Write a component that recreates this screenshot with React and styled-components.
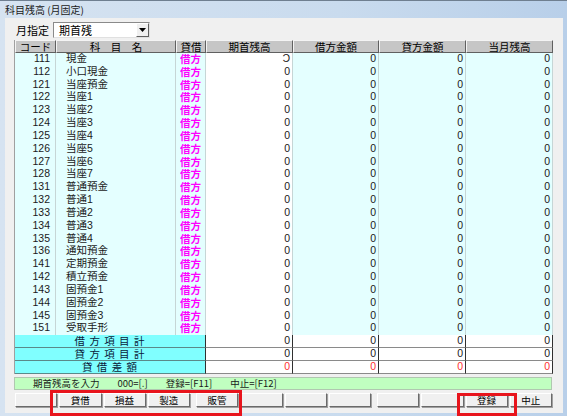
import React from 'react';
import styled, { createGlobalStyle } from 'styled-components';

const GlobalStyle = createGlobalStyle`
  html, body { margin: 0; padding: 0; background: #fff; }
  body { font-family: "Noto Sans CJK JP", "Noto Sans", sans-serif; }
  * { box-sizing: border-box; }
`;

const COLS = '41px 120px 30px 87px 86px 87px 87px';
const ROW_H = '12.84px';

const accounts = [
  ['111', '現金'], ['112', '小口現金'], ['121', '当座預金'], ['122', '当座1'],
  ['123', '当座2'], ['124', '当座3'], ['125', '当座4'], ['126', '当座5'],
  ['127', '当座6'], ['128', '当座7'], ['131', '普通預金'], ['132', '普通1'],
  ['133', '普通2'], ['134', '普通3'], ['135', '普通4'], ['136', '通知預金'],
  ['141', '定期預金'], ['142', '積立預金'], ['143', '固預金1'], ['144', '固預金2'],
  ['145', '固預金3'], ['151', '受取手形'],
];

const summary = [
  { label: '借 方 項 目 計', red: false },
  { label: '貸 方 項 目 計', red: false },
  { label: '貸 借 差 額', red: true },
];

const fkeys = [
  ['', '貸借', '損益', '製造'],
  ['販管', '', '', ''],
  ['', '', '登録', '中止'],
];

const App = () => {
  return (
    <>
      <GlobalStyle />
      <Window>
        <TitleBar>科目残高 (月固定)</TitleBar>
        <Client>
          <MonthRow>
            <MonthLabel>月指定</MonthLabel>
            <Combo>
              <ComboText>期首残</ComboText>
              <ComboButton>
                <svg width="7" height="4" viewBox="0 0 7 4">
                  <path d="M0 0h7L3.5 4z" fill="#000" />
                </svg>
              </ComboButton>
            </Combo>
          </MonthRow>

          <Table>
            <HeaderRow>
              <HeadCell>コード</HeadCell>
              <HeadCell>科　目　名</HeadCell>
              <HeadCell>貸借</HeadCell>
              <HeadCell>期首残高</HeadCell>
              <HeadCell>借方金額</HeadCell>
              <HeadCell>貸方金額</HeadCell>
              <HeadCell>当月残高</HeadCell>
            </HeaderRow>
            {accounts.map(([code, name], i) => (
              <Row key={code}>
                <Cell $align="right" $pad="0 5px 0 0">{code}</Cell>
                <Cell $pad="0 0 0 10px">{name}</Cell>
                <Cell $align="center" $pad="0"><Side>借方</Side></Cell>
                <Cell $align="right" $white>{i === 0 ? 'Ͻ' : '0'}</Cell>
                <Cell $align="right">0</Cell>
                <Cell $align="right">0</Cell>
                <Cell $align="right">0</Cell>
              </Row>
            ))}
            {summary.map(s => (
              <Row key={s.label}>
                <SumLabel>{s.label}</SumLabel>
                {[0, 1, 2, 3].map(k => (
                  <SumValue key={k} $red={s.red}>0</SumValue>
                ))}
              </Row>
            ))}
          </Table>

          <StatusBar>
            <span>期首残高を入力</span>
            <span>000=[.]</span>
            <span>登録=[F11]</span>
            <span>中止=[F12]</span>
          </StatusBar>

          <ButtonBar>
            {fkeys.map((group, g) => (
              <KeyGroup key={g}>
                {group.map((label, k) => (
                  <KeyButton key={k}>{label}</KeyButton>
                ))}
              </KeyGroup>
            ))}
          </ButtonBar>
        </Client>
        <Mark $x={50} $y={389} $w={192} $h={26} />
        <Mark $x={457} $y={392} $w={60} $h={23} />
      </Window>
    </>
  );
};

const Window = styled.div`
  position: relative;
  width: 567px;
  height: 416px;
  display: flex;
  flex-direction: column;
  background: linear-gradient(90deg, #d6e3f1 0%, #c9dbee 60%, #b8cfe9 100%);
  border-top: 1px solid #6f7f90;
  overflow: hidden;
`;

const TitleBar = styled.div`
  height: 17px;
  padding-left: 5px;
  font-size: 10px;
  line-height: 17px;
  color: #1a1a1a;
`;

const Client = styled.div`
  flex: 1;
  margin: 0 4px 3px 5px;
  background: #f0f0f0;
  padding: 4px 0 0 9px;
  display: flex;
  flex-direction: column;
`;

const MonthRow = styled.div`
  display: flex;
  align-items: center;
  height: 16px;
  gap: 4px;
  padding-left: 2px;
`;

const MonthLabel = styled.span`
  font-size: 11px;
  line-height: 16px;
  color: #000;
`;

const Combo = styled.div`
  width: 97px;
  height: 16px;
  display: flex;
  align-items: center;
  background: #fff;
  border: 1px solid #8a8a8a;
  border-right-color: #e0e0e0;
  border-bottom-color: #e0e0e0;
`;

const ComboText = styled.span`
  flex: 1;
  padding-left: 5px;
  font-size: 11px;
  line-height: 14px;
`;

const ComboButton = styled.div`
  width: 13px;
  height: 14px;
  display: flex;
  align-items: center;
  justify-content: center;
  background: #f0f0f0;
  border: 1px solid #fff;
  border-right-color: #606060;
  border-bottom-color: #606060;
`;

const Table = styled.div`
  margin-top: 2px;
  width: 538px;
  border-left: 1px solid #a0a0a0;
`;

const HeaderRow = styled.div`
  display: grid;
  grid-template-columns: ${COLS};
  height: 13px;
`;

const HeadCell = styled.div`
  background: #c6c6c6;
  border-top: 1px solid #f4f4f4;
  border-left: 1px solid #f4f4f4;
  border-right: 1px solid #606060;
  border-bottom: 1px solid #606060;
  text-align: center;
  font-size: 10.5px;
  line-height: 11px;
  color: #000;
  white-space: nowrap;
`;

const Row = styled.div`
  display: grid;
  grid-template-columns: ${COLS};
  height: ${ROW_H};
`;

const Cell = styled.div`
  background: ${p => (p.$white ? '#ffffff' : '#e4ffff')};
  border-right: 1px solid #c6d6d6;
  border-bottom: 1px solid #c6d6d6;
  text-align: ${p => p.$align || 'left'};
  padding: ${p => p.$pad || '0 2px 0 0'};
  font-family: "Liberation Sans", "Noto Sans CJK JP", sans-serif;
  font-size: 10.5px;
  line-height: 11.8px;
  color: #1a1a1a;
  white-space: nowrap;
`;

const Side = styled.span`
  font-family: "Noto Sans CJK JP", sans-serif;
  font-size: 10.5px;
  color: #ff00ff;
  font-weight: 700;
`;

const SumLabel = styled.div`
  grid-column: 1 / 4;
  background: #80ffff;
  border-right: 1px solid #303030;
  border-bottom: 1px solid #5a8a8a;
  text-align: center;
  font-size: 10.5px;
  line-height: 11.8px;
  color: #0a1a3a;
  letter-spacing: 1px;
`;

const SumValue = styled.div`
  background: #fff;
  border-right: 1px solid #303030;
  border-bottom: 1px solid #8a8a8a;
  text-align: right;
  padding-right: 2px;
  font-family: "Liberation Sans", sans-serif;
  font-size: 10.5px;
  line-height: 11.8px;
  color: ${p => (p.$red ? '#ff3030' : '#1a1a1a')};
`;

const StatusBar = styled.div`
  margin-top: 3px;
  width: 538px;
  height: 13px;
  background: #c0ffc0;
  border: 1px solid #b0c8b0;
  display: flex;
  align-items: center;
  padding-left: 18px;
  gap: 18px;
  font-size: 9.5px;
  line-height: 11px;
  color: #1a1a1a;
`;

const ButtonBar = styled.div`
  margin-top: 3px;
  display: flex;
  gap: 6px;
  padding-left: 1px;
`;

const KeyGroup = styled.div`
  width: 175px;
  display: grid;
  grid-template-columns: repeat(4, 1fr);
  gap: 2px;
`;

const KeyButton = styled.div`
  height: 14px;
  background: #f0f0f0;
  border: 1px solid #ffffff;
  border-right-color: #6a6a6a;
  border-bottom-color: #6a6a6a;
  box-shadow: 1px 1px 0 #a0a0a0;
  text-align: center;
  font-size: 9.5px;
  line-height: 12px;
  color: #000;
`;

const Mark = styled.div`
  position: absolute;
  left: ${p => p.$x}px;
  top: ${p => p.$y}px;
  width: ${p => p.$w}px;
  height: ${p => p.$h}px;
  border: 3px solid #e8141c;
  pointer-events: none;
`;

export default App;
